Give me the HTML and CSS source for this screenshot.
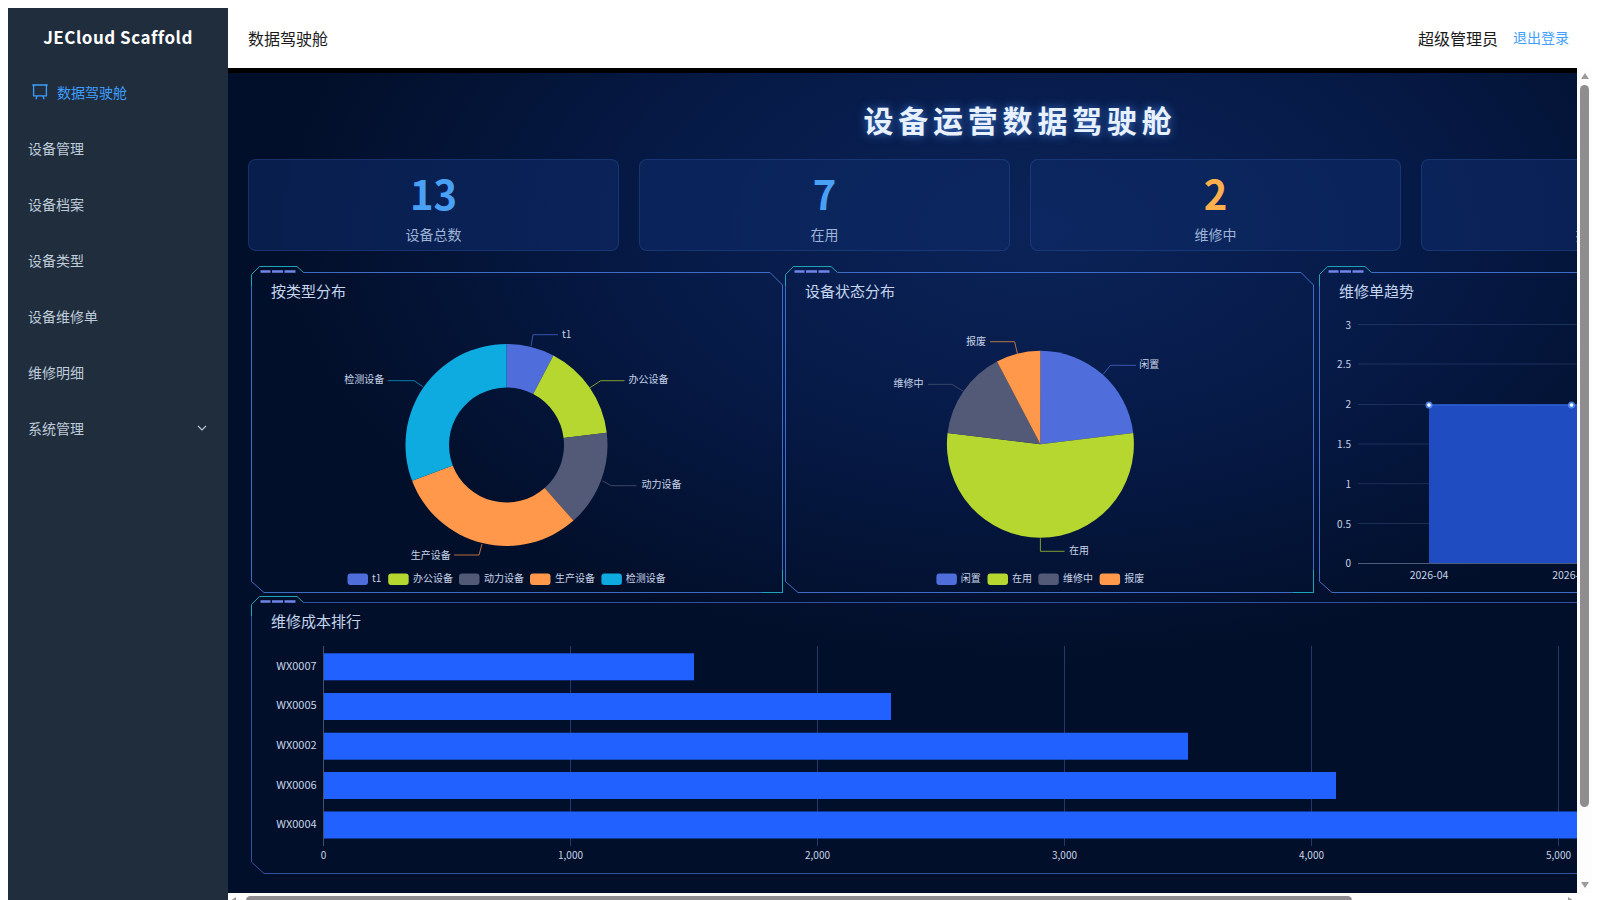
FILE: index.html
```html
<!DOCTYPE html>
<html lang="zh-CN">
<head>
  <meta charset="UTF-8" />
  <title>数据驾驶舱</title>
  <link rel="stylesheet" href="styles.css">
</head>
<body>
  <!-- Shared panel frame pieces -->
  <svg class="defs" width="0" height="0">
    <symbol id="frame-tab" overflow="visible">
      <path class="frame-teal" d="M0.5 20 V8.5 L8.5 0.5 H46 L52.5 6.5"/>
      <path class="frame-dash" d="M9.5 5.5 H19.5 M21 5.5 H32 M33.5 5.5 H44.5"/>
    </symbol>
    <symbol id="frame-small" overflow="visible">
      <path class="frame-blue" d="M0.5 20 V315.5 L13 326.5 H531.5 V19 L519 6.5 H52.5"/>
      <path class="frame-teal" d="M511 326.5 H531.5 V304"/>
    </symbol>
    <symbol id="frame-narrow" overflow="visible">
      <path class="frame-blue" d="M0.5 20 V315.5 L13 326.5 H528.5 V19 L516 6.5 H52.5"/>
      <path class="frame-teal" d="M508 326.5 H528.5 V304"/>
    </symbol>
  </svg>

  <div class="app">
    <!-- Sidebar -->
    <aside class="sidebar">
      <div class="logo">JECloud Scaffold</div>
      <nav class="menu">
        <a class="menu-item active">
          <svg class="menu-icon" width="16" height="16" viewBox="0 0 16 16"><path d="M0.3 1 H15.7 M1.6 1 V11.8 H14.4 V1 M5 11.8 L4 15.2 M11 11.8 L12 15.2"/></svg>
          数据驾驶舱
        </a>
        <a class="menu-item">设备管理</a>
        <a class="menu-item">设备档案</a>
        <a class="menu-item">设备类型</a>
        <a class="menu-item">设备维修单</a>
        <a class="menu-item">维修明细</a>
        <a class="menu-item">
          系统管理
          <svg class="menu-arrow" width="10" height="6" viewBox="0 0 10 6"><path d="M1 1 L5 5 L9 1"/></svg>
        </a>
      </nav>
    </aside>

    <div class="right">
      <!-- Header -->
      <header class="topbar">
        <span class="page-name">数据驾驶舱</span>
        <div class="user">
          <span class="user-name">超级管理员</span>
          <a class="logout">退出登录</a>
        </div>
      </header>

      <div class="scroller">
        <main class="viewport">
          <div class="stage">
            <h1 class="stage-title">设备运营数据驾驶舱</h1>

            <!-- Stat cards -->
            <section class="stats">
              <div class="stat"><div class="stat-num blue">13</div><div class="stat-label">设备总数</div></div>
              <div class="stat"><div class="stat-num blue">7</div><div class="stat-label">在用</div></div>
              <div class="stat"><div class="stat-num orange">2</div><div class="stat-label">维修中</div></div>
              <div class="stat"><div class="stat-num blue">4</div><div class="stat-label">报废/闲置</div></div>
            </section>

            <section class="panels">
              <!-- Donut -->
              <div class="panel">
                <svg class="frame" width="532" height="327"><use href="#frame-small"/><use href="#frame-tab"/></svg>
                <h2 class="panel-title">按类型分布</h2>
                <svg class="chart" width="532" height="290" viewBox="251 303 532 290">
                  <path fill="#4f6edb" d="M506.5 344 A101 101 0 0 1 553.44 355.56 L533.22 394.08 A57.5 57.5 0 0 0 506.5 387.5 Z"/>
                  <path fill="#b5d72f" d="M553.44 355.56 A101 101 0 0 1 606.76 432.83 L563.58 438.07 A57.5 57.5 0 0 0 533.22 394.08 Z"/>
                  <path fill="#535a78" d="M606.76 432.83 A101 101 0 0 1 573.47 520.6 L544.63 488.04 A57.5 57.5 0 0 0 563.58 438.07 Z"/>
                  <path fill="#ff984a" d="M573.47 520.6 A101 101 0 0 1 412.06 480.81 L452.74 465.39 A57.5 57.5 0 0 0 544.63 488.04 Z"/>
                  <path fill="#0dabe0" d="M412.06 480.81 A101 101 0 0 1 506.5 344 L506.5 387.5 A57.5 57.5 0 0 0 452.74 465.39 Z"/>
                  <g class="leaders">
                    <path stroke="#4f6edb" d="M531 346 L533 334.7 H558"/>
                    <path stroke="#b5d72f" d="M590 387.7 L600.7 380.7 H624.6"/>
                    <path stroke="#535a78" d="M602.5 481 L611.4 485.7 H636.4"/>
                    <path stroke="#ff984a" d="M482 544 L479 555 H454"/>
                    <path stroke="#0dabe0" d="M422.9 386.7 L414 380.7 H388"/>
                  </g>
                  <g class="labels">
                    <text x="562" y="333.5">t1</text>
                    <text x="628.6" y="378.2">办公设备</text>
                    <text x="641.4" y="483.2">动力设备</text>
                    <text x="410.7" y="554">生产设备</text>
                    <text x="344.3" y="378.2">检测设备</text>
                  </g>
                  <g class="legend">
                    <rect x="347.5" y="573.5" width="20.5" height="11.5" rx="3" fill="#4f6edb"/><text x="372" y="577.6">t1</text>
                    <rect x="388.2" y="573.5" width="20.5" height="11.5" rx="3" fill="#b5d72f"/><text x="412.9" y="577.6">办公设备</text>
                    <rect x="459" y="573.5" width="20.5" height="11.5" rx="3" fill="#535a78"/><text x="484" y="577.6">动力设备</text>
                    <rect x="530" y="573.5" width="20.5" height="11.5" rx="3" fill="#ff984a"/><text x="555" y="577.6">生产设备</text>
                    <rect x="601.4" y="573.5" width="20.5" height="11.5" rx="3" fill="#0dabe0"/><text x="625.7" y="577.6">检测设备</text>
                  </g>
                </svg>
              </div>

              <!-- Pie -->
              <div class="panel">
                <svg class="frame" width="529" height="327"><use href="#frame-narrow"/><use href="#frame-tab"/></svg>
                <h2 class="panel-title">设备状态分布</h2>
                <svg class="chart" width="529" height="290" viewBox="785 303 529 290">
                  <path fill="#4f6edb" d="M1040.4 444.3 V350.8 A93.5 93.5 0 0 1 1133.22 433.03 Z"/>
                  <path fill="#b5d72f" d="M1040.4 444.3 L1133.22 433.03 A93.5 93.5 0 1 1 947.58 433.03 Z"/>
                  <path fill="#535a78" d="M1040.4 444.3 L947.58 433.03 A93.5 93.5 0 0 1 996.95 361.51 Z"/>
                  <path fill="#ff984a" d="M1040.4 444.3 L996.95 361.51 A93.5 93.5 0 0 1 1040.4 350.8 Z"/>
                  <g class="leaders">
                    <path stroke="#4f6edb" d="M1103.2 374.3 L1110.4 365.3 H1136"/>
                    <path stroke="#b5d72f" d="M1040.4 538.3 V551.3 H1064.6"/>
                    <path stroke="#535a78" d="M962.9 391 L952 384.3 H928"/>
                    <path stroke="#ff984a" d="M1017.5 354 L1014.6 341.7 H990"/>
                  </g>
                  <g class="labels">
                    <text x="1139.3" y="363.8">闲置</text>
                    <text x="1069" y="549.8">在用</text>
                    <text x="893.6" y="382.8">维修中</text>
                    <text x="966" y="340.2">报废</text>
                  </g>
                  <g class="legend">
                    <rect x="936.4" y="573.5" width="20.5" height="11.5" rx="3" fill="#4f6edb"/><text x="960.7" y="577.6">闲置</text>
                    <rect x="987.5" y="573.5" width="20.5" height="11.5" rx="3" fill="#b5d72f"/><text x="1012" y="577.6">在用</text>
                    <rect x="1038.3" y="573.5" width="20.5" height="11.5" rx="3" fill="#535a78"/><text x="1063" y="577.6">维修中</text>
                    <rect x="1099.6" y="573.5" width="20.5" height="11.5" rx="3" fill="#ff984a"/><text x="1124.3" y="577.6">报废</text>
                  </g>
                </svg>
              </div>

              <!-- Trend -->
              <div class="panel">
                <svg class="frame" width="532" height="327"><use href="#frame-small"/><use href="#frame-tab"/></svg>
                <h2 class="panel-title">维修单趋势</h2>
                <svg class="chart" width="532" height="290" viewBox="1319 303 532 290">
                  <g class="grid-lines">
                    <path d="M1358 324.5 H1851 M1358 364 H1851 M1358 404.5 H1851 M1358 444 H1851 M1358 483.7 H1851 M1358 523.5 H1851"/>
                  </g>
                  <rect class="area" x="1429" y="405" width="422" height="158"/>
                  <path class="area-line" d="M1429 405 H1851"/>
                  <path class="axis-line" d="M1358 563.5 H1851"/>
                  <circle class="dot-glow" cx="1429" cy="405" r="3.5"/>
                  <circle class="dot" cx="1429" cy="405" r="1.8"/>
                  <circle class="dot-glow" cx="1571.5" cy="405" r="3.5"/>
                  <circle class="dot" cx="1571.5" cy="405" r="1.8"/>
                  <g class="axis-y">
                    <text x="1351" y="324">3</text>
                    <text x="1351" y="363.5">2.5</text>
                    <text x="1351" y="403.5">2</text>
                    <text x="1351" y="443.5">1.5</text>
                    <text x="1351" y="483.2">1</text>
                    <text x="1351" y="523">0.5</text>
                    <text x="1351" y="562.5">0</text>
                  </g>
                  <g class="axis-x dates">
                    <text x="1429" y="574.5">2026-04</text>
                    <text x="1571.5" y="574.5">2026-05</text>
                  </g>
                </svg>
              </div>

              <!-- Cost ranking -->
              <div class="panel panel-wide">
                <svg class="frame" width="1541" height="278">
                  <path class="frame-blue dim" d="M0.5 20 V266 L13 277.5 H1541 M52.5 6.5 H1541"/>
                  <use href="#frame-tab"/>
                </svg>
                <h2 class="panel-title">维修成本排行</h2>
                <svg class="chart" width="1541" height="241" viewBox="251 633 1541 241">
                  <path class="grid-v" d="M570.5 646 V846 M817.5 646 V846 M1064.5 646 V846 M1311.5 646 V846 M1558.5 646 V846"/>
                  <path class="axis-v" d="M323.5 646 V846"/>
                  <rect class="bar" x="324" y="653.3" width="370" height="27"/>
                  <rect class="bar" x="324" y="693" width="567" height="27"/>
                  <rect class="bar" x="324" y="732.7" width="864" height="27"/>
                  <rect class="bar" x="324" y="772" width="1012" height="27"/>
                  <rect class="bar" x="324" y="811.5" width="1300" height="27"/>
                  <g class="axis-y wide-labels">
                    <text x="316.7" y="665">WX0007</text>
                    <text x="316.7" y="704">WX0005</text>
                    <text x="316.7" y="744">WX0002</text>
                    <text x="316.7" y="783.5">WX0006</text>
                    <text x="316.7" y="823">WX0004</text>
                  </g>
                  <g class="axis-x">
                    <text x="323.6" y="854">0</text>
                    <text x="570.5" y="854">1,000</text>
                    <text x="817.5" y="854">2,000</text>
                    <text x="1064.5" y="854">3,000</text>
                    <text x="1311.5" y="854">4,000</text>
                    <text x="1558.5" y="854">5,000</text>
                  </g>
                </svg>
              </div>
            </section>
          </div>
        </main>

        <!-- Scrollbars -->
        <div class="vbar">
          <span class="arrow-up"></span>
          <span class="vthumb"></span>
          <span class="arrow-down"></span>
        </div>
        <div class="hbar">
          <span class="arrow-left"></span>
          <span class="hthumb"></span>
          <span class="arrow-right"></span>
        </div>
      </div>
    </div>
  </div>
</body>
</html>
```

FILE: styles.css
```css
/* General Page Styling */
* {
  box-sizing: border-box;
}

html, body {
  height: 100%;
}

body {
  margin: 0;
  background: #fff;
  overflow: hidden;
  font-family: "Noto Sans CJK SC", "Noto Sans", sans-serif;
}

.defs {
  position: absolute;
}

.app {
  display: flex;
  height: calc(100vh - 8px);
  margin: 8px 8px 0;
}

/* Sidebar */
.sidebar {
  width: 220px;
  flex-shrink: 0;
  background: #1f2d3d;
}

.logo {
  height: 56px;
  line-height: 58px;
  text-align: center;
  color: #fff;
  font-size: 17px;
  font-weight: 700;
  letter-spacing: 0.5px;
}

.menu-item {
  display: flex;
  align-items: center;
  height: 56px;
  padding: 0 21px 1px 20px;
  color: #bfcbd9;
  font-size: 14px;
}

.menu-item.active {
  padding-left: 24px;
  gap: 9px;
  color: #409eff;
}

.menu-icon path {
  fill: none;
  stroke: #409eff;
  stroke-width: 1.3;
}

.menu-arrow {
  margin-left: auto;
}

.menu-arrow path {
  fill: none;
  stroke: #bfcbd9;
  stroke-width: 1.1;
}

/* Header */
.right {
  flex: 1;
  min-width: 0;
  display: flex;
  flex-direction: column;
}

.topbar {
  height: 60px;
  flex-shrink: 0;
  display: flex;
  align-items: center;
  justify-content: space-between;
  padding: 0 23px 1px 20px;
  font-size: 16px;
  color: #1a1a1a;
}

.user {
  display: flex;
  align-items: center;
  gap: 15px;
}

.logout {
  margin-bottom: 2px;
  font-size: 14px;
  color: #409eff;
}

/* Scroll area */
.scroller {
  flex: 1;
  min-height: 0;
  display: grid;
  grid-template-columns: 1fr 15px;
  grid-template-rows: 1fr 7px;
}

.viewport {
  overflow: hidden;
  border-top: 5px solid #000;
  background:
    radial-gradient(ellipse 760px 430px at 60% 19%, #0b2358 0%, #061a47 50%, rgba(3, 16, 43, 0) 100%),
    #020f2a;
}

.stage {
  width: 1584px;
  padding: 26px 20px 0;
}

.stage-title {
  margin: 0 0 20px;
  height: 40px;
  line-height: 40px;
  text-align: center;
  font-size: 30px;
  font-weight: 700;
  letter-spacing: 4.8px;
  color: #e8f1ff;
  text-shadow: 0 0 10px rgba(80, 150, 255, 0.7);
}

/* Stat cards */
.stats {
  display: grid;
  grid-template-columns: repeat(4, 371px);
  gap: 20px;
  margin-bottom: 15px;
}

.stat {
  height: 92px;
  padding-top: 9px;
  text-align: center;
  background: rgba(13, 42, 104, 0.6);
  border: 1px solid rgba(64, 110, 190, 0.25);
  border-radius: 8px;
}

.stat-num {
  height: 48px;
  line-height: 48px;
  font-size: 40px;
  font-weight: 700;
}

.stat-num.blue {
  color: #4aa0f5;
}

.stat-num.orange {
  color: #ffb04d;
}

.stat-label {
  margin-top: 6px;
  line-height: 22px;
  font-size: 14px;
  color: #9fb4d6;
}

/* Chart panels */
.panels {
  display: grid;
  grid-template-columns: 534px 534px 532px;
  row-gap: 3px;
  margin-left: 3px;
}

.panel {
  position: relative;
  height: 327px;
  padding-top: 14px;
}

.panel-wide {
  grid-column: 1 / -1;
  height: 278px;
}

.frame {
  position: absolute;
  top: 0;
  left: 0;
  overflow: visible;
  pointer-events: none;
}

.frame-blue {
  fill: none;
  stroke: #3f6cc4;
  stroke-width: 1;
}

.frame-blue.dim {
  stroke: #33509f;
}

.frame-teal {
  fill: none;
  stroke: #1fa3b6;
  stroke-width: 1;
}

.frame-dash {
  fill: none;
  stroke: #6f86e8;
  stroke-width: 2.4;
}

.panel-title {
  margin: 0 0 1px;
  padding-left: 20px;
  height: 22px;
  line-height: 22px;
  font-size: 15px;
  font-weight: 400;
  color: #c5d5ee;
}

.chart {
  display: block;
  overflow: hidden;
}

.chart text {
  font-family: "Noto Sans CJK SC", "Noto Sans", sans-serif;
  font-size: 10px;
  fill: #c8d4e8;
  dominant-baseline: central;
}

.leaders path {
  fill: none;
  stroke-width: 1;
  opacity: 0.7;
}

.axis-y text {
  text-anchor: end;
}

.chart .wide-labels text {
  font-size: 11px;
}

.axis-x text {
  text-anchor: middle;
}

.chart .dates text {
  font-size: 10.5px;
}

.grid-lines path {
  stroke: rgba(90, 120, 180, 0.28);
  fill: none;
}

.area {
  fill: #1f4cc0;
}

.area-line {
  stroke: #2f5fd8;
  stroke-width: 1.5;
}

.axis-line {
  stroke: #4c5d7c;
}

.dot-glow {
  fill: rgba(90, 150, 255, 0.8);
}

.dot {
  fill: #fff;
}

.grid-v {
  stroke: #22386e;
  fill: none;
}

.axis-v {
  stroke: #44506a;
  fill: none;
}

.bar {
  fill: #2161ff;
}

/* Scrollbars */
.vbar {
  grid-row: 1;
  grid-column: 2;
  display: flex;
  flex-direction: column;
  align-items: center;
  padding-top: 5px;
  background: #fdfdfd;
}

.vthumb {
  width: 9px;
  height: 722px;
  margin-top: 6px;
  border-radius: 5px;
  background: #8f8d90;
}

.arrow-up {
  border: 4.5px solid transparent;
  border-top: 0;
  border-bottom: 6px solid #9a9a9a;
}

.arrow-down {
  margin-top: auto;
  margin-bottom: 5px;
  border: 4.5px solid transparent;
  border-bottom: 0;
  border-top: 6px solid #9a9a9a;
}

.hbar {
  grid-row: 2;
  grid-column: 1;
  overflow: hidden;
  display: flex;
  align-items: flex-start;
  padding: 3px 0 0 2px;
  background: #fdfdfd;
}

.hthumb {
  width: 1106px;
  height: 9px;
  margin-left: 10px;
  border-radius: 5px;
  background: #8f8d90;
}

.arrow-left {
  margin-top: 1px;
  border: 4.5px solid transparent;
  border-left: 0;
  border-right: 6px solid #9a9a9a;
}

.arrow-right {
  margin-top: 1px;
  margin-left: auto;
  margin-right: 3px;
  border: 4.5px solid transparent;
  border-right: 0;
  border-left: 6px solid #9a9a9a;
}
```
